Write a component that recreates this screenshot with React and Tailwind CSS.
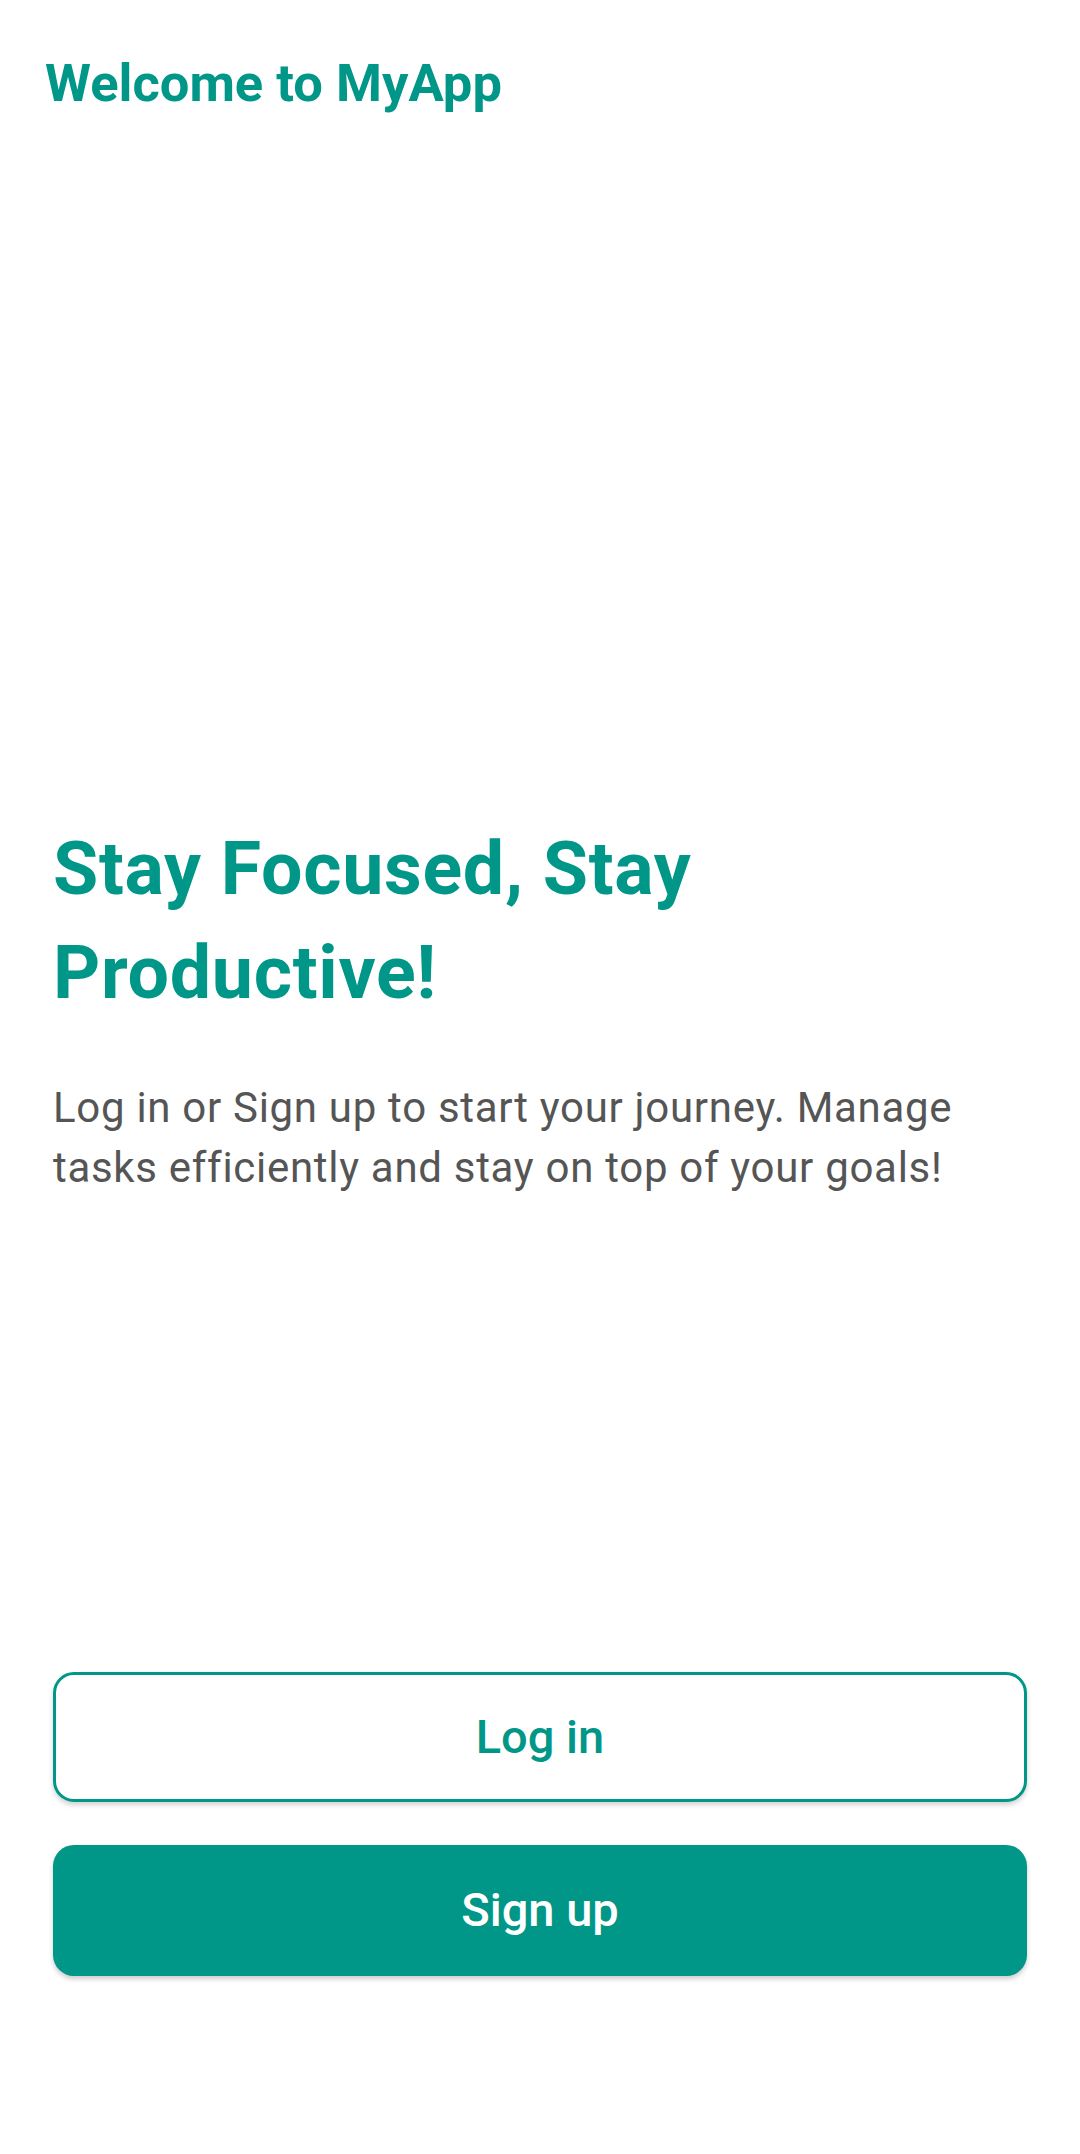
import React from 'react';

export default function App() {
  return (
    <div className="min-h-[2154px] w-[1080px] bg-white font-['Roboto','Noto_Sans',sans-serif]">
      {/* Barra superior */}
      <header className="pt-[53px] pl-[45px]">
        <h1 className="text-[52.5px] leading-[60px] font-bold text-[#009688]">Welcome to MyApp</h1>
      </header>

      <main className="px-[53px]">
        {/* Texto principal */}
        <section className="mt-[704px]">
          <h2 className="text-[73.5px] leading-[104px] font-bold tracking-[0.7px] text-[#009688]">
            Stay Focused, Stay Productive!
          </h2>
          <p className="mt-[53px] text-[42px] leading-[60px] tracking-[0.7px] text-[#555555]">
            Log in or Sign up to start your journey. Manage tasks efficiently and stay on top of your goals!
          </p>
        </section>

        {/* Botones */}
        <div className="mt-[474px] flex flex-col gap-[43px]">
          <button className="h-[130px] w-full rounded-[21px] border-[3px] border-[#009688] bg-white text-[47px] font-medium text-[#009688] shadow-[0_3px_5px_rgba(0,0,0,0.18)]">
            Log in
          </button>
          <button className="h-[131px] w-full rounded-[21px] bg-[#009688] text-[47px] font-medium text-white shadow-[0_3px_5px_rgba(0,0,0,0.2)]">
            Sign up
          </button>
        </div>
      </main>
    </div>
  );
}
